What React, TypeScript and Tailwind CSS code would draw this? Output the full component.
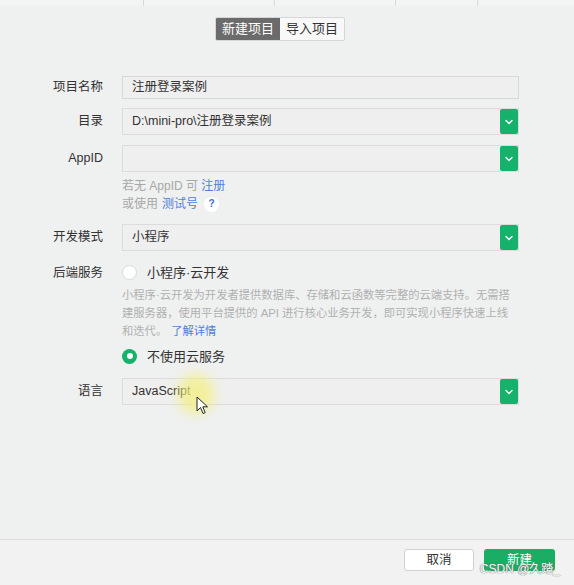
import React from "react";

const font = { fontFamily: '"Liberation Sans", "Noto Sans CJK SC", sans-serif' };

function Chevron() {
  return (
    <svg width="8" height="6" viewBox="0 0 8 6" fill="none">
      <path d="M1 1.5 L4 4.5 L7 1.5" stroke="white" strokeWidth="1.4" strokeLinecap="round" strokeLinejoin="round" />
    </svg>
  );
}

function Select({ value }: { value: string }) {
  return (
    <div className="flex h-[27px] w-[397px] border border-[#dcdcdc] bg-[#efefef]">
      <div className="flex flex-1 items-center pl-[9px] text-[12.5px] text-[#333]">{value}</div>
      <div className="flex w-[18px] items-center justify-center rounded-[2px] bg-[#16b26c]">
        <Chevron />
      </div>
    </div>
  );
}

function Label({ children }: { children: React.ReactNode }) {
  return (
    <div className="mr-[19px] w-[50px] shrink-0 whitespace-nowrap text-right text-[12.5px] text-[#333]">
      {children}
    </div>
  );
}

export default function App() {
  return (
    <div className="relative flex h-[585px] w-[574px] flex-col overflow-hidden bg-[#eff0f0]" style={font}>
      {/* top strip */}
      <div className="flex h-[6px] bg-[#f3f4f4]">
        <div className="w-[144px] border-r border-[#d9d9d9]" />
        <div className="w-[131px] border-r border-[#d9d9d9]" />
        <div className="w-[121px] border-r border-[#d9d9d9]" />
        <div className="w-[82px] border-r border-[#d9d9d9]" />
        <div className="flex-1" />
      </div>

      {/* tabs */}
      <div className="mt-[11px] flex justify-center pr-[14px]">
        <div className="flex h-[24px] overflow-hidden rounded-[2px] border border-[#d6d6d6] text-[13px]">
          <div className="flex w-[64px] items-center justify-center bg-[#6b6b6b] text-white">新建项目</div>
          <div className="flex w-[64px] items-center justify-center bg-[#f8f8f8] text-[#333]">导入项目</div>
        </div>
      </div>

      {/* form */}
      <div className="mt-[35px] flex flex-col pl-[53px]">
        <div className="flex items-center">
          <Label>项目名称</Label>
          <div className="flex h-[23px] w-[397px] items-center border border-[#d8d8d8] bg-[#efefef] pl-[9px] text-[12.5px] text-[#333]">
            注册登录案例
          </div>
        </div>

        <div className="mt-[9px] flex items-center">
          <Label>目录</Label>
          <Select value="D:\mini-pro\注册登录案例" />
        </div>

        <div className="mt-[10px] flex items-center">
          <Label>AppID</Label>
          <Select value="" />
        </div>

        <div className="ml-[69px] mt-[5px] flex flex-col text-[12px] leading-[18px] text-[#a8a8a8]">
          <div>
            若无 AppID 可 <span className="text-[#4f7fdc]">注册</span>
          </div>
          <div className="flex items-center">
            或使用 <span className="ml-[4px] text-[#4f7fdc]">测试号</span>
            <span className="ml-[6px] flex h-[15px] w-[15px] items-center justify-center rounded-full bg-white text-[10px] font-bold text-[#3b6fd6]">
              ?
            </span>
          </div>
        </div>

        <div className="mt-[11px] flex items-center">
          <Label>开发模式</Label>
          <Select value="小程序" />
        </div>

        <div className="mt-[12px] flex items-start">
          <div className="mt-[1px]">
            <Label>后端服务</Label>
          </div>
          <div className="flex flex-col">
            <div className="flex items-center">
              <div className="h-[15px] w-[15px] rounded-full border border-[#dadada] bg-white" />
              <span className="ml-[10px] text-[13px] text-[#333]">小程序·云开发</span>
            </div>
            <div className="mt-[3px] w-[397px] text-[11.3px] leading-[18px] text-[#b0b0b0]">
              小程序·云开发为开发者提供数据库、存储和云函数等完整的云端支持。无需搭建服务器，使用平台提供的 API 进行核心业务开发，即可实现小程序快速上线和迭代。
              <span className="ml-[4px] text-[#4f7fdc]">了解详情</span>
            </div>
            <div className="mt-[7px] flex items-center">
              <div className="flex h-[15px] w-[15px] items-center justify-center rounded-full bg-[#16b26c]">
                <div className="h-[6px] w-[6px] rounded-full bg-white" />
              </div>
              <span className="ml-[10px] text-[13px] text-[#333]">不使用云服务</span>
            </div>
          </div>
        </div>

        <div className="mt-[12px] flex items-center">
          <Label>语言</Label>
          <Select value="JavaScript" />
        </div>
      </div>

      <div className="flex-1" />

      {/* footer */}
      <div className="flex h-[46px] items-start justify-end border-t border-[#dedede] bg-[#f2f2f2] pr-[19px] pt-[9px]">
        <div className="flex h-[22px] w-[70px] items-center justify-center rounded-[3px] border border-[#d0d0d0] bg-white text-[12.5px] text-[#333]">
          取消
        </div>
        <div className="ml-[10px] flex h-[22px] w-[71px] items-center justify-center rounded-[3px] bg-[#1aad63] text-[12.5px] text-white">
          新建
        </div>
      </div>

      {/* watermark */}
      <div className="absolute right-[14px] bottom-[7px] text-[12px] text-[#f4f4f4] [text-shadow:0_0_1px_#777,0_0_1px_#777]">
        CSDN @久踏_
      </div>

      {/* cursor highlight */}
      <div className="pointer-events-none absolute left-[178px] top-[374px] h-[40px] w-[36px] rounded-full bg-[#f4f07a] opacity-70 blur-[6px]" />
      <svg className="absolute left-[196px] top-[396px]" width="13" height="19" viewBox="0 0 13 19">
        <path d="M1 1 L1 15 L4.5 11.5 L7 17.5 L9.2 16.6 L6.8 10.8 L11.5 10.8 Z" fill="white" stroke="#222" strokeWidth="1" strokeLinejoin="round" />
      </svg>
    </div>
  );
}
